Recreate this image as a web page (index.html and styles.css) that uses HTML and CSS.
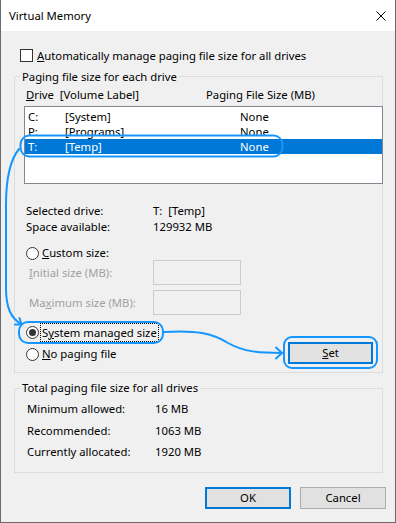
FILE: index.html
```html
<!DOCTYPE html>
<html>
<head>
<meta charset="utf-8">
<title>Virtual Memory</title>
<link rel="stylesheet" href="styles.css">
</head>
<body>
<div class="stage">
  <div class="window">
    <div class="titlebar">
      <span class="title">Virtual Memory</span>
      <svg class="close" width="10" height="10" viewBox="0 0 10 10"><path d="M0.5 0.5 L9.5 9.5 M9.5 0.5 L0.5 9.5" stroke="#000" stroke-width="1"/></svg>
    </div>
    <div class="content">
      <div class="check-row">
        <span class="checkbox"></span>
        <span class="label"><u>A</u>utomatically manage paging file size for all drives</span>
      </div>

      <div class="group group-drives">
        <div class="group-title">Paging file size for each drive</div>
        <div class="list-header">
          <span><u>D</u>rive&nbsp; [Volume Label]</span>
          <span>Paging File Size (MB)</span>
        </div>
        <div class="listbox">
          <div class="row"><span>C:</span><span>[System]</span><span>None</span></div>
          <div class="row"><span>P:</span><span>[Programs]</span><span>None</span></div>
          <div class="row selected"><span>T:</span><span>[Temp]</span><span>None</span></div>
        </div>
        <div class="info">
          <span>Selected drive:</span><span>T:&nbsp; [Temp]</span>
          <span>Space available:</span><span>129932 MB</span>
        </div>
        <div class="radio-row custom">
          <span class="radio"></span>
          <span><u>C</u>ustom size:</span>
        </div>
        <div class="field-row">
          <span class="field-label"><u>I</u>nitial size (MB):</span>
          <span class="input"></span>
        </div>
        <div class="field-row second">
          <span class="field-label">Ma<u>x</u>imum size (MB):</span>
          <span class="input"></span>
        </div>
        <div class="choice-row">
          <div class="choices">
            <div class="radio-row">
              <span class="radio checked"></span>
              <span class="focus">S<u>y</u>stem managed size</span>
            </div>
            <div class="radio-row">
              <span class="radio"></span>
              <span><u>N</u>o paging file</span>
            </div>
          </div>
          <div class="button default set"><u>S</u>et</div>
        </div>
      </div>

      <div class="group group-total">
        <div class="group-title">Total paging file size for all drives</div>
        <div class="totals">
          <span>Minimum allowed:</span><span>16 MB</span>
          <span>Recommended:</span><span>1063 MB</span>
          <span>Currently allocated:</span><span>1920 MB</span>
        </div>
      </div>

      <div class="actions">
        <div class="button default">OK</div>
        <div class="button">Cancel</div>
      </div>
    </div>
  </div>

  <svg class="annotations" width="396" height="523" viewBox="0 0 396 523">
    <g fill="none" stroke="#1596ff" stroke-width="2" stroke-linecap="round" stroke-linejoin="round">
      <rect x="20.5" y="135.5" width="262" height="21" rx="9"/>
      <rect x="19" y="322" width="144" height="21" rx="9"/>
      <rect x="284" y="337" width="93" height="31" rx="8"/>
      <path d="M19 149 C10 160 6 178 6 205 L6 288 C6 308 11 318 21 324"/>
      <path d="M15 324.5 L21.5 324.5 L19.5 318"/>
      <path d="M164 332 C196 330 212 333 228 343 C244 352 260 353 282 353"/>
      <path d="M276 347.5 L282 353 L276 358.5"/>
    </g>
  </svg>
</div>
</body>
</html>
```

FILE: styles.css
```css
* { box-sizing: border-box; }
html, body { margin: 0; padding: 0; }
body {
  font-family: "Noto Sans", "Open Sans", sans-serif;
  font-size: 11.3px;
  color: #000;
  background: #fff;
}
u { text-decoration: underline; text-underline-offset: 1px; }

.stage { position: relative; width: 396px; height: 523px; }

.window {
  width: 396px;
  height: 523px;
  border: 1px solid #6b6b6b;
  border-top: none;
  background: #f0f0f0;
  display: flex;
  flex-direction: column;
}

.titlebar {
  height: 31px;
  flex: none;
  background: #fff;
  display: flex;
  align-items: center;
  justify-content: space-between;
  padding: 0 9px 0 8px;
}
.title { line-height: 16px; }
.close { display: block; }

.content { padding: 0 12px 0 13px; }

.check-row {
  margin-top: 18px;
  margin-left: 6px;
  height: 13px;
  display: flex;
  align-items: center;
  line-height: 13px;
}
.checkbox {
  width: 13px; height: 13px;
  border: 1px solid #333;
  background: #fff;
  flex: none;
  margin-right: 4px;
}

.group {
  border: 1px solid #dcdcdc;
}
.group-title {
  width: fit-content;
  line-height: 16px;
  margin: -8px 0 0 5px;
  padding: 0 2px;
  background: #f0f0f0;
}
.group-drives { margin-top: 14px; padding-bottom: 8px; }

.list-header {
  margin-top: 2px;
  padding-left: 11px;
  line-height: 16px;
  display: grid;
  grid-template-columns: 180px auto;
}

.listbox {
  margin: 3px 0 0 9px;
  width: 359px;
  height: 78px;
  border: 1px solid #828790;
  background: #fff;
  padding-top: 2px;
}
.row {
  height: 15px;
  line-height: 15px;
  padding-left: 3px;
  display: grid;
  grid-template-columns: 37px 175px auto;
}
.row.selected { background: #0078d7; color: #fff; }

.info {
  margin-top: 19px;
  padding-left: 11px;
  line-height: 16px;
  display: grid;
  grid-template-columns: 127px auto;
}

.radio-row {
  display: flex;
  align-items: center;
  height: 16px;
  line-height: 16px;
}
.radio-row.custom { margin-top: 11px; padding-left: 11px; height: 14px; line-height: 14px; }
.radio {
  width: 13px; height: 13px;
  border: 1px solid #333;
  border-radius: 50%;
  background: #fff;
  flex: none;
  margin-right: 3px;
  display: flex;
  align-items: center;
  justify-content: center;
}
.radio.checked::after {
  content: "";
  width: 7px; height: 7px;
  border-radius: 50%;
  background: #333;
}

.field-row {
  display: flex;
  align-items: center;
  height: 25px;
  padding-left: 14px;
  color: #a0a0a0;
}
.field-row.second { margin-top: 5px; }
.field-label { width: 124px; flex: none; }
.input {
  width: 88px;
  height: 25px;
  border: 1px solid #cccccc;
  background: #f0f0f0;
}

.choice-row {
  margin-top: 9px;
  padding-left: 11px;
  display: flex;
  justify-content: space-between;
  align-items: flex-start;
}
.choices { display: flex; flex-direction: column; gap: 6px; }
.focus {
  outline: 1px dotted #000;
  outline-offset: 0;
  padding: 0 1px;
  margin-left: -1px;
  line-height: 17px;
}

.button {
  width: 86px;
  height: 22px;
  border: 1px solid #adadad;
  background: #e1e1e1;
  display: flex;
  align-items: center;
  justify-content: center;
  line-height: 16px;
}
.button.default { border: 2px solid #0078d7; }
.set { width: 85px; margin: 18px 9px 0 0; }

.group-total { margin-top: 15px; padding-bottom: 12px; }
.group-total .group-title { margin-top: -9px; }
.totals {
  margin-top: 5px;
  padding-left: 12px;
  line-height: 16px;
  display: grid;
  grid-template-columns: 128px auto;
  row-gap: 5.5px;
}

.actions {
  margin: 14px -3px 0 0;
  display: flex;
  justify-content: flex-end;
  gap: 9px;
}

.annotations {
  position: absolute;
  left: 0;
  top: 0;
  pointer-events: none;
}
```
